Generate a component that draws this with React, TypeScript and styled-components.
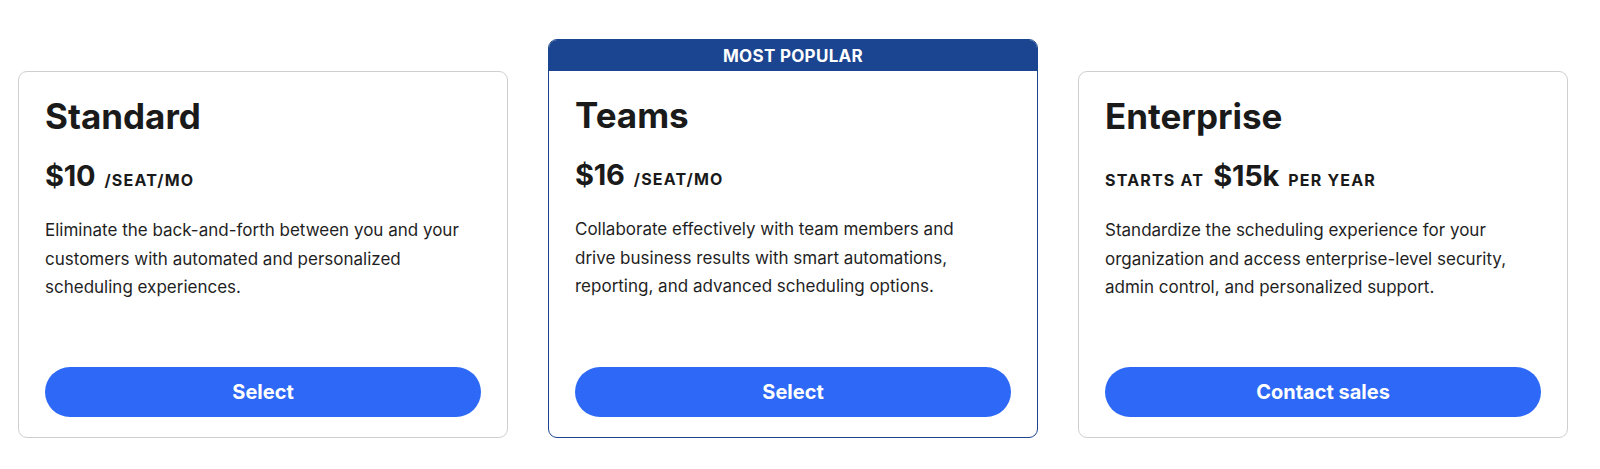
import React from 'react'
import styled, { createGlobalStyle } from 'styled-components'

const GlobalStyle = createGlobalStyle`
  html, body {
    margin: 0;
    padding: 0;
    background: #ffffff;
  }
  body {
    font-family: Inter, 'Liberation Sans', sans-serif;
    color: #1a1a1a;
    -webkit-font-smoothing: antialiased;
  }
`

const PlanRow = styled.div`
  display: flex;
  align-items: flex-end;
  gap: 40px;
  padding: 39px 32px 31px 18px;
`

const PlanCard = styled.div<{ featured?: boolean }>`
  width: 490px;
  box-sizing: border-box;
  display: flex;
  flex-direction: column;
  border: 1px solid ${({ featured }) => (featured ? '#1b4590' : '#cfcfcf')};
  border-radius: 9px;
  background: #ffffff;
  overflow: hidden;
`

const PopularBanner = styled.div`
  height: 31px;
  background: #1b4590;
  color: #ffffff;
  font-size: 17px;
  font-weight: 700;
  letter-spacing: 0.3px;
  display: flex;
  align-items: center;
  justify-content: center;
`

const CardBody = styled.div<{ featured?: boolean }>`
  height: ${({ featured }) => (featured ? 366 : 365)}px;
  box-sizing: border-box;
  padding: 22px 26px 20px 26px;
  display: flex;
  flex-direction: column;
`

const PlanName = styled.h2`
  margin: 0;
  font-size: 35px;
  line-height: 44px;
  font-weight: 700;
  color: #1a1a1a;
`

const PriceLine = styled.div`
  margin-top: 20px;
  display: flex;
  align-items: baseline;
  gap: 9px;
  height: 34px;
`

const Amount = styled.span`
  font-size: 29px;
  font-weight: 700;
  letter-spacing: -0.2px;
  color: #1a1a1a;
`

const Unit = styled.span`
  font-size: 16px;
  font-weight: 700;
  letter-spacing: 1.2px;
  color: #1a1a1a;
`

const Description = styled.p<{ wrapWidth: number }>`
  margin: 24px 0 0 0;
  max-width: ${({ wrapWidth }) => wrapWidth}px;
  font-size: 17px;
  line-height: 28.6px;
  font-weight: 400;
  color: #1f1f1f;
`

const ActionButton = styled.button`
  margin-top: auto;
  height: 50px;
  width: 100%;
  border: none;
  border-radius: 25px;
  background: #2d68f6;
  color: #ffffff;
  font-family: inherit;
  font-size: 20px;
  font-weight: 700;
  cursor: pointer;
`

type Plan = {
  name: string
  before?: string
  amount: string
  unit: string
  description: string
  wrapWidth: number
  action: string
  featured?: boolean
}

const plans: Plan[] = [
  {
    name: 'Standard',
    amount: '$10',
    unit: '/SEAT/MO',
    description:
      'Eliminate the back-and-forth between you and your customers with automated and personalized scheduling experiences.',
    wrapWidth: 432,
    action: 'Select'
  },
  {
    name: 'Teams',
    amount: '$16',
    unit: '/SEAT/MO',
    description:
      'Collaborate effectively with team members and drive business results with smart automations, reporting, and advanced scheduling options.',
    wrapWidth: 410,
    action: 'Select',
    featured: true
  },
  {
    name: 'Enterprise',
    before: 'STARTS AT',
    amount: '$15k',
    unit: 'PER YEAR',
    description:
      'Standardize the scheduling experience for your organization and access enterprise-level security, admin control, and personalized support.',
    wrapWidth: 432,
    action: 'Contact sales'
  }
]

export default function App() {
  return (
    <>
      <GlobalStyle />
      <PlanRow>
        {plans.map(plan => (
          <PlanCard key={plan.name} featured={plan.featured}>
            {plan.featured && <PopularBanner>MOST POPULAR</PopularBanner>}
            <CardBody featured={plan.featured}>
              <PlanName>{plan.name}</PlanName>
              <PriceLine>
                {plan.before && <Unit>{plan.before}</Unit>}
                <Amount>{plan.amount}</Amount>
                <Unit>{plan.unit}</Unit>
              </PriceLine>
              <Description wrapWidth={plan.wrapWidth}>{plan.description}</Description>
              <ActionButton>{plan.action}</ActionButton>
            </CardBody>
          </PlanCard>
        ))}
      </PlanRow>
    </>
  )
}
